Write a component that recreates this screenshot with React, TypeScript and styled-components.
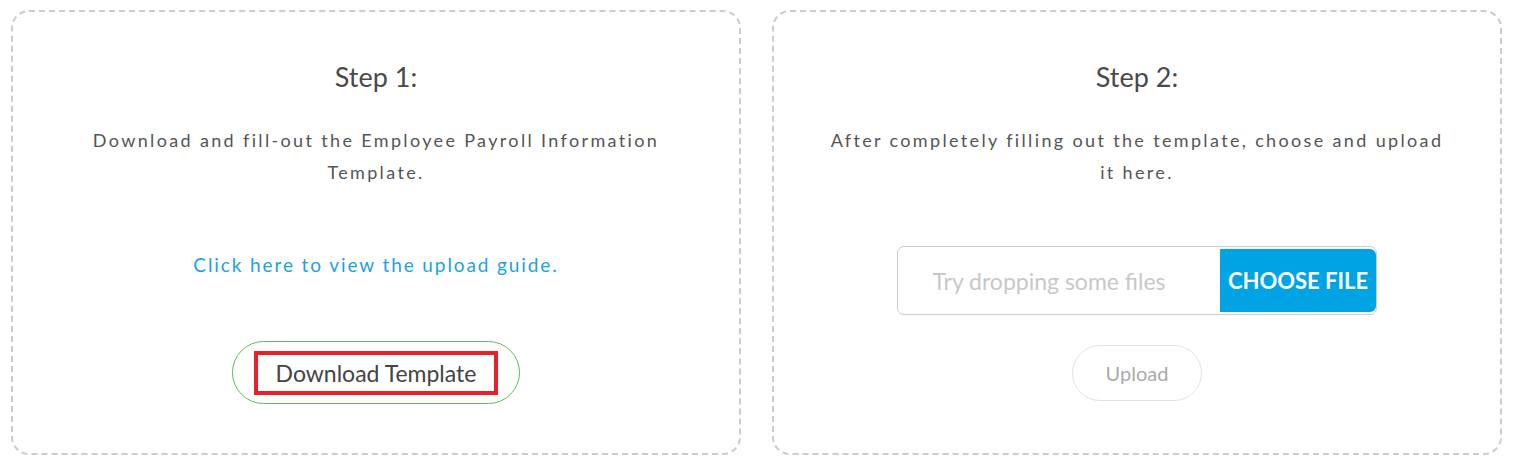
import React from "react";
import styled, { createGlobalStyle } from "styled-components";

const GlobalStyle = createGlobalStyle`
  body {
    margin: 0;
    background: #ffffff;
    font-family: "Lato", "Liberation Sans", sans-serif;
  }
`;

const Page = styled.div`
  display: grid;
  grid-template-columns: 730px 730px;
  column-gap: 31px;
  padding: 10px 17px 16px 11px;
`;

const StepCard = styled.div`
  height: 445px;
  box-sizing: border-box;
  border: 2px dashed #cccccc;
  border-radius: 18px;
  padding: 49px 48px 0;
  display: flex;
  flex-direction: column;
  align-items: center;
  text-align: center;
`;

const StepTitle = styled.h2`
  margin: 0;
  font-size: 27px;
  font-weight: 400;
  color: #4a4a4a;
  line-height: 32px;
`;

const StepText = styled.p`
  margin: 31px 0 0;
  font-size: 18px;
  line-height: 32px;
  letter-spacing: 2.35px;
  color: #555555;
`;

const GuideLink = styled.a`
  margin-top: 65px;
  font-size: 19px;
  letter-spacing: 1.9px;
  color: #1aa3e0;
  text-decoration: none;
  cursor: pointer;
`;

const PillButton = styled.button`
  margin-top: 65px;
  width: 288px;
  height: 63px;
  border: 1px solid #5cb85c;
  border-radius: 32px;
  background: #ffffff;
  display: flex;
  align-items: center;
  justify-content: center;
  padding: 0;
  cursor: pointer;
  font-family: inherit;
`;

const HighlightLabel = styled.span`
  display: flex;
  align-items: center;
  justify-content: center;
  width: 244px;
  height: 44px;
  box-sizing: border-box;
  border: 4px solid #e8202a;
  font-size: 23px;
  color: #444444;
`;

const FilePicker = styled.div`
  margin-top: 58px;
  width: 480px;
  height: 69px;
  box-sizing: border-box;
  border: 1px solid #cccccc;
  border-radius: 7px;
  display: flex;
  overflow: hidden;
`;

const DropZone = styled.div`
  flex: 1;
  display: flex;
  align-items: center;
  justify-content: center;
  padding-right: 20px;
  font-size: 23px;
  color: #c8c8c8;
`;

const ChooseButton = styled.button`
  width: 156px;
  margin: 2px 0 2px 0;
  border: none;
  border-radius: 0 6px 6px 0;
  background: #00a4e4;
  color: #ffffff;
  font-family: inherit;
  font-size: 22px;
  font-weight: 700;
  cursor: pointer;
  padding: 0;
`;

const UploadButton = styled.button`
  margin-top: 30px;
  width: 130px;
  height: 56px;
  border: 1px solid #e2e2e2;
  border-radius: 28px;
  background: #ffffff;
  color: #aaaaaa;
  font-family: inherit;
  font-size: 20px;
  cursor: pointer;
`;

export default function App() {
  return (
    <>
      <GlobalStyle />
      <Page>
        <StepCard>
          <StepTitle>Step 1:</StepTitle>
          <StepText>
            Download and fill-out the Employee Payroll Information Template.
          </StepText>
          <GuideLink>Click here to view the upload guide.</GuideLink>
          <PillButton>
            <HighlightLabel>Download Template</HighlightLabel>
          </PillButton>
        </StepCard>
        <StepCard>
          <StepTitle>Step 2:</StepTitle>
          <StepText>
            After completely filling out the template, choose and upload it
            here.
          </StepText>
          <FilePicker>
            <DropZone>Try dropping some files</DropZone>
            <ChooseButton>CHOOSE FILE</ChooseButton>
          </FilePicker>
          <UploadButton>Upload</UploadButton>
        </StepCard>
      </Page>
    </>
  );
}
